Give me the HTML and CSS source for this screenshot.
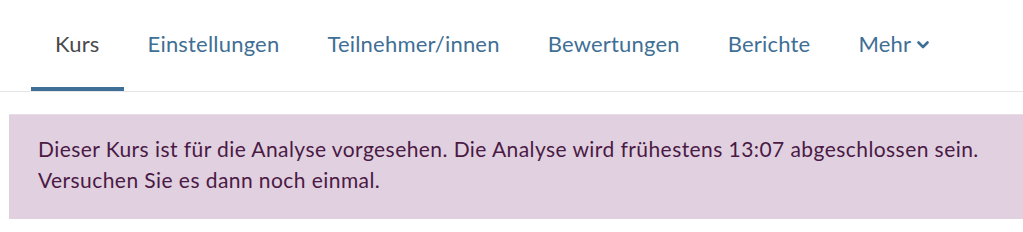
FILE: index.html
```html
<!DOCTYPE html>
<html lang="de">
<head>
    <meta charset="UTF-8">
    <title>Kurs</title>
    <link rel="stylesheet" href="styles.css">
</head>
<body>

<div class="page">
    <ul class="tabs">
        <li class="tab active"><a href="#">Kurs</a></li>
        <li class="tab"><a href="#">Einstellungen</a></li>
        <li class="tab"><a href="#">Teilnehmer/innen</a></li>
        <li class="tab"><a href="#">Bewertungen</a></li>
        <li class="tab"><a href="#">Berichte</a></li>
        <li class="tab"><a href="#">Mehr <svg class="chevron" width="12" height="8" viewBox="0 0 12 8"><polyline points="1.5,1.5 6,6 10.5,1.5" fill="none" stroke="currentColor" stroke-width="2.6" stroke-linecap="round" stroke-linejoin="round"/></svg></a></li>
    </ul>

    <div class="alert">
        Dieser Kurs ist für die Analyse vorgesehen. Die Analyse wird frühestens 13:07 abgeschlossen sein.<br>
        Versuchen Sie es dann noch einmal.
    </div>
</div>

</body>
</html>
```

FILE: styles.css
```css
* {
    padding: 0;
    margin: 0;
    box-sizing: border-box;
}
body {
    font-family: Lato, "Noto Sans", sans-serif;
    font-size: 21px;
    background: #fff;
    overflow: hidden;
}
.page {
    width: 1023px;
}
.tabs {
    list-style: none;
    display: flex;
    padding-left: 31px;
    border-bottom: 1px solid #e4e4e9;
}
.tab a {
    display: block;
    padding: 28px 24px 27px 24px;
    font-size: 22px;
    letter-spacing: 0.2px;
    line-height: 32px;
    color: #3f6f95;
    text-decoration: none;
    border-bottom: 4px solid transparent;
    white-space: nowrap;
}
.tab.active a {
    color: #4a4a4a;
    border-bottom-color: #3f6f95;
}
.tab .chevron {
    margin-left: 0;
    vertical-align: 3px;
}
.alert {
    margin: 22px -30px 0 9px;
    padding: 18px 29px 24px 29px;
    line-height: 31px;
    letter-spacing: 0.43px;
    background: #e0d0e0;
    border-top: 1px solid #e8dce8;
    color: #4a1a44;
}
```
